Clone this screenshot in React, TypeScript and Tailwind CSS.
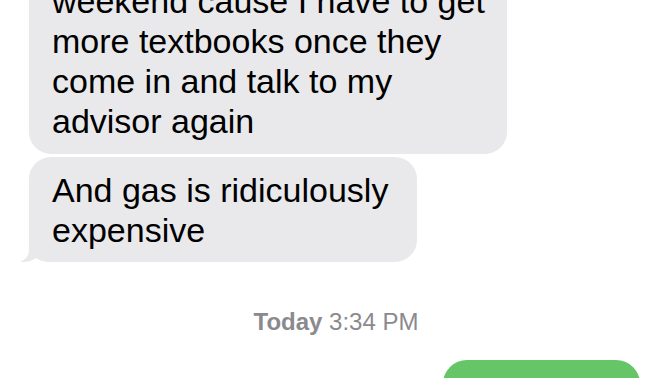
import React from "react";

const Tail = () => (
  <svg
    className="absolute left-[-9px] bottom-0"
    width="30"
    height="25"
    viewBox="0 0 30 25"
  >
    <path
      d="M9 0 L9 13 C9 19 5 23 0 25 C6 25.5 12 24 16 21 C19 23 23 25 30 25 L30 0 Z"
      fill="#e9e9eb"
    />
  </svg>
);

const App = () => {
  return (
    <div
      className="w-[672px] h-[378px] overflow-hidden bg-white flex flex-col"
      style={{ fontFamily: '"Liberation Sans", Arial, sans-serif' }}
    >
      <div className="ml-[29px] -mt-[32px] w-[478px] rounded-[22px] bg-[#e9e9eb] pl-[23px] pt-[13px] pb-[13px] text-[34px] leading-[40px] text-black whitespace-nowrap">
        <div>weekend cause I have to get</div>
        <div>more textbooks once they</div>
        <div>come in and talk to my</div>
        <div>advisor again</div>
      </div>

      <div className="relative ml-[29px] mt-[3px] w-[388px] rounded-[22px] bg-[#e9e9eb] pl-[23px] pt-[13px] pb-[12px] text-[34px] leading-[40px] text-black whitespace-nowrap">
        <div>And gas is ridiculously</div>
        <div>expensive</div>
        <Tail />
      </div>

      <div className="mt-[46px] text-center text-[24px] leading-[28px] text-[#8a8a8e]">
        <span className="font-semibold">Today</span> 3:34 PM
      </div>

      <div className="mt-[24px] ml-[443px] w-[197px] h-[60px] shrink-0 rounded-[24px] bg-[#66c566]" />
    </div>
  );
};

export default App;
